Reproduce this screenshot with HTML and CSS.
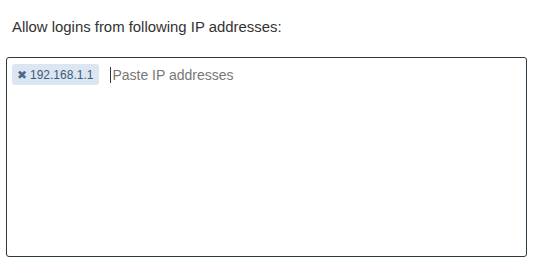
FILE: index.html
```html
<!DOCTYPE html>
<html>
<head>
<meta charset="utf-8">
<link rel="stylesheet" href="styles.css">
</head>
<body>
<div class="field">
  <label class="label">Allow logins from following IP addresses:</label>
  <div class="box">
    <span class="tag"><span class="tag-x">✖</span>192.168.1.1</span>
    <span class="input"><span class="caret"></span>Paste IP addresses</span>
  </div>
</div>
</body>
</html>
```

FILE: styles.css
```css
html, body {
  margin: 0;
  padding: 0;
  background: #ffffff;
}
body {
  font-family: "Liberation Sans", Arial, sans-serif;
}
.field {
  padding: 19px 10px 0 6px;
}
.label {
  display: block;
  font-size: 14.9px;
  line-height: 16px;
  color: #333333;
  padding-left: 6px;
  margin-bottom: 22px;
}
.box {
  box-sizing: border-box;
  width: 521px;
  height: 200px;
  border: 1px solid #2b3a42;
  border-radius: 3px;
  padding: 6px 5px;
  display: flex;
  align-items: flex-start;
  gap: 11px;
}
.tag {
  display: inline-flex;
  align-items: center;
  height: 21px;
  padding: 0 6px 0 5px;
  background: #dce6f2;
  border-radius: 3px;
  color: #3d5a78;
  font-size: 12px;
}
.tag-x {
  font-size: 12px;
  color: #4a6888;
  margin-right: 3px;
}
.input {
  display: inline-flex;
  align-items: center;
  height: 21px;
  font-size: 14px;
  color: #777777;
}
.caret {
  display: inline-block;
  width: 1px;
  height: 16px;
  background: #333333;
  margin-right: 1px;
}
```
